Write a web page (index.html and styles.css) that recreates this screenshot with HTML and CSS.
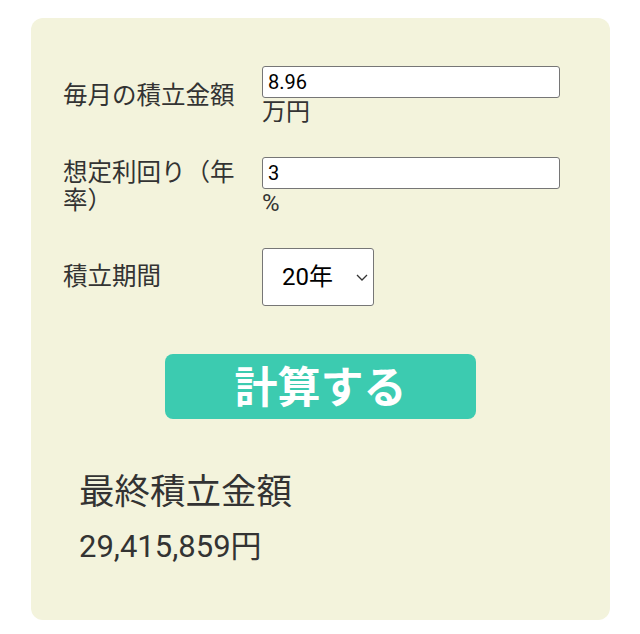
FILE: index.html
```html
<!DOCTYPE html>
<html lang="ja">
<head>
<meta charset="utf-8">
<title>積立計算</title>
<link rel="stylesheet" href="styles.css">
</head>
<body>
<div class="card">
  <div class="form">
    <label class="label" for="monthly">毎月の積立金額</label>
    <div class="field">
      <input class="input" id="monthly" type="text" value="8.96">
      <div class="unit">万円</div>
    </div>
    <label class="label" for="rate">想定利回り（年率）</label>
    <div class="field">
      <input class="input" id="rate" type="text" value="3">
      <div class="unit">%</div>
    </div>
    <label class="label" for="years">積立期間</label>
    <div class="field">
      <div class="select-wrap">
        <select class="select" id="years">
          <option>20年</option>
        </select>
        <svg class="chevron" width="12" height="7" viewBox="0 0 12 7"><path d="M1 1 L6 6 L11 1" fill="none" stroke="#333" stroke-width="1.3"/></svg>
      </div>
    </div>
  </div>
  <div class="actions">
    <button class="button" type="button">計算する</button>
  </div>
  <div class="result">
    <div class="result-title">最終積立金額</div>
    <div class="result-value">29,415,859円</div>
  </div>
</div>
</body>
</html>
```
FILE: styles.css
```css
html, body {
  margin: 0;
  padding: 0;
  background: #ffffff;
}
body {
  font-family: Roboto, "Noto Sans CJK JP", sans-serif;
  color: #333333;
}
.card {
  box-sizing: border-box;
  margin: 18px 0 0 31px;
  width: 579px;
  height: 602px;
  padding: 48px 50px 0 32px;
  background: #f3f3dc;
  border-radius: 12px;
}
.form {
  display: grid;
  grid-template-columns: 199px 298px;
  row-gap: 31px;
  align-items: center;
}
.label {
  font-size: 24.5px;
  line-height: 28px;
  width: 180px;
  color: #333333;
}
.field {
  display: flex;
  flex-direction: column;
  align-items: flex-start;
}
.input {
  box-sizing: border-box;
  width: 298px;
  height: 32px;
  margin: 0;
  padding: 0 5px;
  border: 1px solid #767676;
  border-radius: 3px;
  background: #ffffff;
  font-family: Roboto, "Noto Sans CJK JP", sans-serif;
  font-size: 20px;
  color: #000000;
}
.unit {
  font-size: 24px;
  line-height: 28px;
  color: #333333;
}
.select-wrap {
  position: relative;
  width: 112px;
  height: 58px;
}
.select {
  -webkit-appearance: none;
  appearance: none;
  box-sizing: border-box;
  width: 112px;
  height: 58px;
  margin: 0;
  padding: 0 0 0 19px;
  border: 1px solid #767676;
  border-radius: 3px;
  background: #ffffff;
  font-family: Roboto, "Noto Sans CJK JP", sans-serif;
  font-size: 24px;
  color: #000000;
}
.chevron {
  position: absolute;
  left: 94px;
  top: 26px;
  pointer-events: none;
}
.actions {
  display: flex;
  justify-content: center;
  margin: 48px 0 0 18px;
}
.button {
  box-sizing: border-box;
  width: 311px;
  height: 65px;
  border: none;
  border-radius: 8px;
  background: #3ccbb0;
  color: #ffffff;
  font-family: Roboto, "Noto Sans CJK JP", sans-serif;
  font-size: 43px;
  font-weight: bold;
  line-height: 1;
  padding: 4px 0 0 0;
}
.result {
  padding-left: 16px;
  margin-top: 52px;
}
.result-title {
  font-size: 35.5px;
  line-height: 42px;
}
.result-value {
  margin-top: 15px;
  font-size: 31px;
  line-height: 37px;
}
```
